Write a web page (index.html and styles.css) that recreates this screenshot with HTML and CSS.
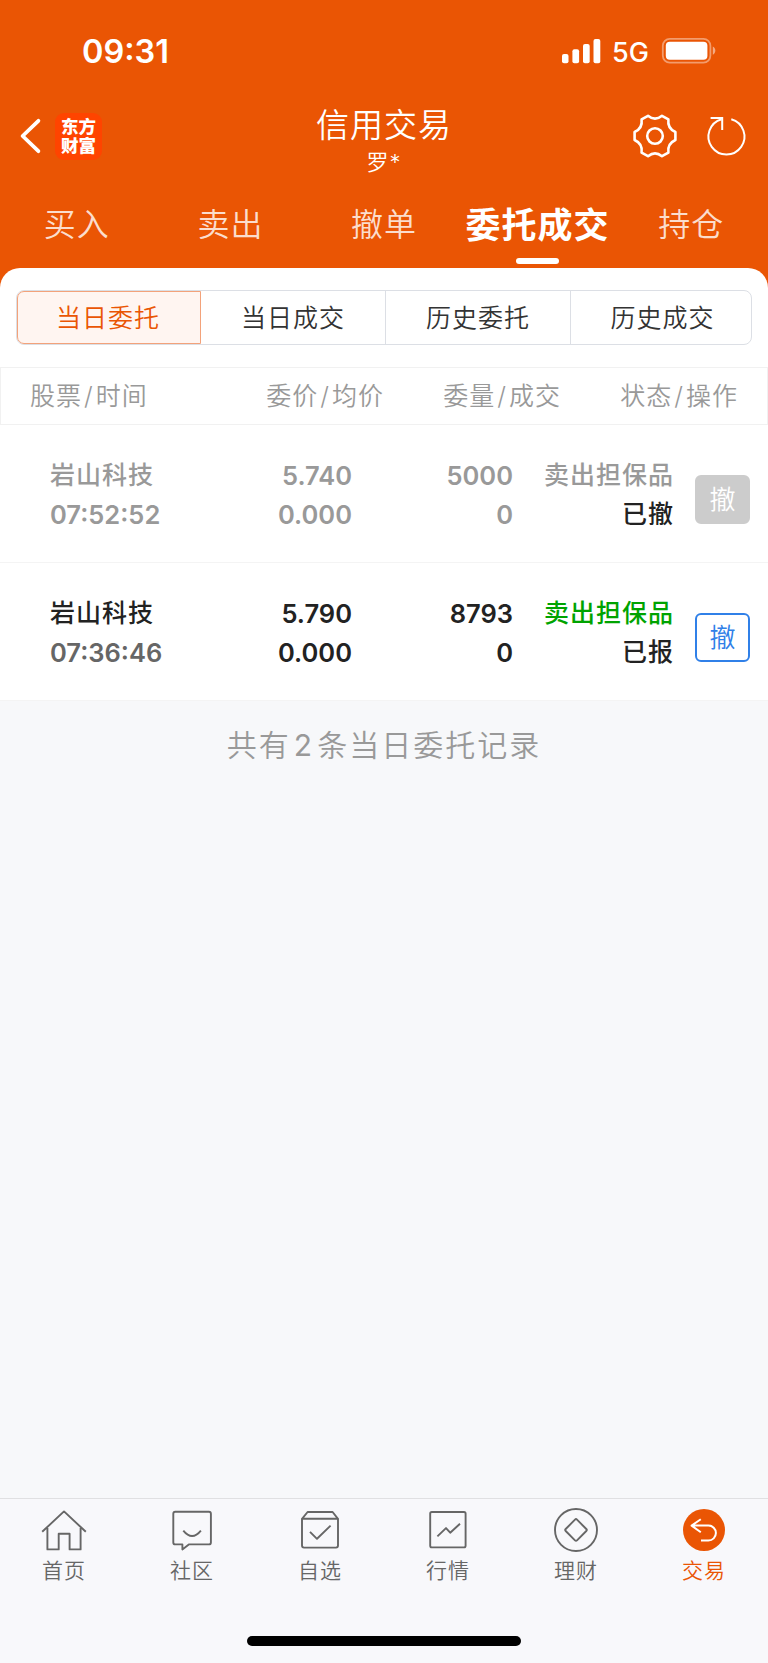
FILE: index.html
```html
<!DOCTYPE html>
<html lang="zh-CN">
<head>
    <meta charset="UTF-8">
    <meta name="viewport" content="width=device-width, initial-scale=1.0">
    <title>信用交易</title>
    <link rel="stylesheet" href="styles.css">
</head>
<body>
<div class="app">
    <header class="header">
        <!-- Status bar -->
        <div class="status-bar">
            <span class="time">09:31</span>
            <div class="status-icons">
                <svg class="signal" width="39" height="25" viewBox="0 0 39 25" fill="#fff">
                    <rect x="0" y="15" width="6.5" height="9.3" rx="2"/>
                    <rect x="10.4" y="10.3" width="6.7" height="14" rx="2"/>
                    <rect x="21" y="5" width="6.7" height="19.3" rx="2"/>
                    <rect x="31.5" y="0" width="6.8" height="24.3" rx="2"/>
                </svg>
                <span class="network">5G</span>
                <svg class="battery" width="54" height="26" viewBox="0 0 54 26">
                    <rect x="0.8" y="0.8" width="47.6" height="23.8" rx="7" fill="none" stroke="#fff" stroke-opacity="0.42" stroke-width="1.8"/>
                    <rect x="3.8" y="3.8" width="41.6" height="18" rx="4" fill="#fff"/>
                    <path d="M50.8 8.6c3.4 1.6 3.4 6.6 0 8.2z" fill="#fff" fill-opacity="0.5"/>
                </svg>
            </div>
        </div>

        <!-- Title bar -->
        <div class="nav-bar">
            <div class="nav-left">
                <svg width="22" height="36" viewBox="0 0 22 36" fill="none" stroke="#fff" stroke-width="3.8" stroke-linecap="round" stroke-linejoin="round">
                    <path d="M18.4 2.8L2.6 18l15.8 15.2"/>
                </svg>
                <div class="logo"><span>东方</span><span>财富</span></div>
            </div>
            <div class="nav-title">
                <h1>信用交易</h1>
                <p>罗*</p>
            </div>
            <div class="nav-right">
                <svg width="46" height="46" viewBox="0 0 46 46" fill="none" stroke="#fff" stroke-width="2.6" stroke-linejoin="round">
                    <path d="M16 2.8Q23 8.6 30 2.8L36.4 6.4Q35.2 15.4 43.4 19V27Q35.2 30.6 36.4 39.6L30 43.2Q23 37.4 16 43.2L9.6 39.6Q10.8 30.6 2.6 27V19Q10.8 15.4 9.6 6.4Z"/>
                    <circle cx="23" cy="23" r="7.8"/>
                </svg>
                <svg width="40" height="42" viewBox="0 0 40 42" fill="none" stroke="#fff" stroke-width="2">
                    <path d="M24.3 4.2A18 18 0 1 1 14.6 4.2"/>
                    <path d="M3.6 3H15.2V15"/>
                </svg>
            </div>
        </div>

        <nav class="tabs">
            <a class="tab">买入</a>
            <a class="tab">卖出</a>
            <a class="tab">撤单</a>
            <a class="tab active">委托成交</a>
            <a class="tab">持仓</a>
        </nav>
    </header>

    <main class="content">
        <div class="panel">
            <div class="segment">
                <button class="segment-item active">当日委托</button>
                <button class="segment-item">当日成交</button>
                <button class="segment-item">历史委托</button>
                <button class="segment-item">历史成交</button>
            </div>

            <div class="list-head">
                <span>股票<i>/</i>时间</span>
                <span>委价<i>/</i>均价</span>
                <span>委量<i>/</i>成交</span>
                <span>状态<i>/</i>操作</span>
            </div>

            <!-- Orders -->
            <div class="order cancelled">
                <div class="cell"><p>岩山科技</p><p class="num order-time">07:52:52</p></div>
                <div class="cell"><p class="num">5.740</p><p class="num">0.000</p></div>
                <div class="cell"><p class="num">5000</p><p class="num">0</p></div>
                <div class="cell"><p class="side">卖出担保品</p><p class="state">已撤</p></div>
                <button class="cancel-btn">撤</button>
            </div>
            <div class="order">
                <div class="cell"><p>岩山科技</p><p class="num order-time">07:36:46</p></div>
                <div class="cell"><p class="num">5.790</p><p class="num">0.000</p></div>
                <div class="cell"><p class="num">8793</p><p class="num">0</p></div>
                <div class="cell"><p class="side">卖出担保品</p><p class="state">已报</p></div>
                <button class="cancel-btn">撤</button>
            </div>
        </div>
        <p class="summary">共有<span>2</span>条当日委托记录</p>
    </main>

    <footer class="tab-bar">
        <div class="tab-bar-items">
            <a class="bar-item">
                <svg width="46" height="46" viewBox="0 0 46 46">
                    <path d="M1.2 22.8L23 2.4l21.8 20.4M6.4 19v21.4h11.3V24.8h10.9v15.6h11V19"/>
                </svg>
                <span>首页</span>
            </a>
            <a class="bar-item">
                <svg width="46" height="46" viewBox="0 0 46 46">
                    <path d="M6.3 2.8h33.6q2 0 2 2v28.6q0 2-2 2H19.8l-6.4 5v-5H6.3q-2 0-2-2V4.8q0-2 2-2z"/>
                    <path d="M14.3 21.6q8.8 10.8 17.6 0"/>
                </svg>
                <span>社区</span>
            </a>
            <a class="bar-item">
                <svg width="46" height="46" viewBox="0 0 46 46">
                    <path d="M5 9.8h36v26.8q0 2-2 2H7q-2 0-2-2zL10.6 3h25L41 9.8"/>
                    <path d="M13 22.8l7 7L33.6 16.6"/>
                </svg>
                <span>自选</span>
            </a>
            <a class="bar-item">
                <svg width="46" height="46" viewBox="0 0 46 46">
                    <rect x="5.2" y="3" width="35.4" height="35.4" rx="1.6"/>
                    <path d="M12.4 27.4l8.6-8.3 4.2 4.6 9.8-9"/>
                </svg>
                <span>行情</span>
            </a>
            <a class="bar-item">
                <svg width="46" height="46" viewBox="0 0 46 46">
                    <circle cx="23" cy="21" r="21"/>
                    <path d="M22 10.6q1-1 2 0l9.3 9.4q1 1 0 2L24 31.4q-1 1-2 0L12.7 22q-1-1 0-2z"/>
                </svg>
                <span>理财</span>
            </a>
            <a class="bar-item active">
                <svg width="46" height="46" viewBox="0 0 46 46">
                    <circle class="dot" cx="23" cy="21" r="21"/>
                    <path d="M19.8 10.2l-9.2 6.4 9.2 6.6M10.6 16.6h16.8a7.5 7.5 0 0 1 0 15H20"/>
                </svg>
                <span>交易</span>
            </a>
        </div>
        <div class="home-indicator"></div>
    </footer>
</div>
</body>
</html>
```
FILE: styles.css
```css
* {
    box-sizing: border-box;
}

body {
    margin: 0;
    font-family: Inter, "Noto Sans CJK SC", sans-serif;
    color: #222;
}

h1,
p {
    margin: 0;
}

button {
    font-family: inherit;
    padding: 0;
}

svg {
    display: block;
    overflow: visible;
}

.app {
    display: flex;
    flex-direction: column;
    width: 768px;
    height: 1663px;
    background-color: #f7f8fa;
}

/* Header */
.header {
    height: 288px;
    background-color: #ea5504;
    color: #fff;
}

.status-bar {
    display: flex;
    justify-content: space-between;
    height: 96px;
    padding: 31px 52px 0 82px;
}

.time {
    font-size: 32.5px;
    font-weight: 600;
    line-height: 42px;
}

.status-icons {
    display: flex;
    padding-top: 7px;
}

.signal {
    margin-top: 1px;
}

.network {
    width: 61px;
    padding-left: 11px;
    font-size: 27px;
    font-weight: 500;
    line-height: 30px;
}

.nav-bar {
    display: grid;
    grid-template-columns: 1fr 200px 1fr;
    height: 92px;
}

.nav-left {
    display: flex;
    align-items: center;
    height: 80px;
    padding-left: 20px;
    gap: 13px;
}

.logo {
    display: flex;
    flex-direction: column;
    align-items: center;
    justify-content: center;
    width: 47px;
    height: 47px;
    border-radius: 9px;
    background-color: #ff4400;
    font-size: 17.5px;
    font-weight: 900;
    line-height: 19px;
}

.nav-title {
    padding-top: 7px;
    text-align: center;
}

.nav-title h1 {
    font-size: 33px;
    font-weight: 350;
    line-height: 44px;
    letter-spacing: 1px;
}

.nav-title p {
    font-size: 22px;
    font-weight: 350;
    line-height: 30px;
    letter-spacing: 1px;
}

.nav-right {
    display: flex;
    align-items: center;
    justify-content: flex-end;
    height: 80px;
    padding-right: 21px;
    gap: 29px;
}

.tabs {
    display: grid;
    grid-template-columns: repeat(5, 1fr);
    height: 80px;
}

.tab {
    font-size: 32px;
    font-weight: 350;
    line-height: 74px;
    letter-spacing: 1px;
    text-align: center;
    color: #fbddcd;
}

.tab.active {
    display: flex;
    flex-direction: column;
    align-items: center;
    font-size: 35px;
    font-weight: 700;
    color: #fff;
}

.tab.active::after {
    content: "";
    width: 43px;
    height: 6px;
    margin-top: -4px;
    border-radius: 3px;
    background-color: #fff;
}

/* Orders panel */
.content {
    flex: 1;
    margin-top: -20px;
}

.panel {
    padding-top: 22px;
    border-radius: 20px 20px 0 0;
    background-color: #fff;
}

.segment {
    display: grid;
    grid-template-columns: 184px 185px 185px 1fr;
    width: 736px;
    height: 55px;
    margin-left: 16px;
    border: 1px solid #dcdfe5;
    border-radius: 8px;
}

.segment-item {
    padding-bottom: 3px;
    border: 0;
    border-right: 1px solid #dcdfe5;
    background: none;
    color: #333;
    font-size: 25px;
    font-weight: 350;
    letter-spacing: 1px;
}

.segment-item:last-child {
    padding-left: 3px;
    border-right: 0;
}

.segment-item.active {
    padding-right: 2px;
    border: 1px solid #f3a27a;
    border-radius: 7px 0 0 7px;
    background-color: #fff5f1;
    color: #ea5504;
}

.list-head {
    display: grid;
    grid-template-columns: 1fr 177px 177px 177px;
    height: 58px;
    margin-top: 22px;
    padding: 0 29px;
    border: 1px solid #f1f1f1;
    color: #999;
    font-size: 25px;
    font-weight: 350;
    line-height: 57px;
    letter-spacing: 1px;
    text-align: right;
}

.list-head span:first-child {
    text-align: left;
}

.list-head i {
    margin: 0 2px;
    font-style: normal;
}

.order {
    display: grid;
    grid-template-columns: 1fr 161px 161px 161px 76px;
    height: 138px;
    padding: 31px 18px 0 50px;
    border-bottom: 1px solid #f4f4f4;
    font-size: 25px;
    font-weight: 500;
    line-height: 39px;
    letter-spacing: 1px;
    text-align: right;
}

.cell:first-child {
    text-align: left;
}

.num {
    font-size: 25.5px;
    font-weight: 580;
    letter-spacing: 0;
}

.order-time {
    color: #666;
}

.side {
    color: #00a300;
}

.cancelled,
.cancelled .order-time,
.cancelled .side {
    color: #999;
}

.state {
    color: #222;
}

.cancelled .state {
    color: #222;
}

.cancel-btn {
    justify-self: end;
    width: 55px;
    height: 49px;
    margin-top: 19px;
    padding-bottom: 4px;
    border: 2px solid #3080e8;
    border-radius: 6px;
    background-color: #fff;
    color: #3080e8;
    font-size: 26px;
    font-weight: 350;
}

.cancelled .cancel-btn {
    border-color: #ccc;
    background-color: #ccc;
    color: #fff;
}

.summary {
    padding-top: 22px;
    color: #999;
    font-size: 30px;
    font-weight: 350;
    line-height: 44px;
    letter-spacing: 2px;
    text-align: center;
}

.summary span {
    margin: 0 3px;
    font-weight: 400;
}

/* Bottom tab bar */
.tab-bar {
    height: 165px;
    border-top: 1px solid #e0e0e2;
    background-color: #f8f8fb;
}

.tab-bar-items {
    display: grid;
    grid-template-columns: repeat(6, 1fr);
    height: 137px;
    padding-top: 10px;
}

.bar-item {
    display: flex;
    flex-direction: column;
    align-items: center;
    color: #666;
    font-size: 21px;
    font-weight: 350;
    line-height: 32px;
    letter-spacing: 1px;
}

.bar-item svg {
    fill: none;
    stroke: #666;
    stroke-width: 1.9;
    stroke-linejoin: round;
}

.bar-item.active {
    color: #ea5504;
}

.bar-item.active svg {
    stroke: #fff;
    stroke-width: 2;
}

.bar-item .dot {
    fill: #ea5504;
    stroke: none;
}

.home-indicator {
    width: 274px;
    height: 10px;
    margin: 0 auto;
    border-radius: 5px;
    background-color: #000;
}
```
